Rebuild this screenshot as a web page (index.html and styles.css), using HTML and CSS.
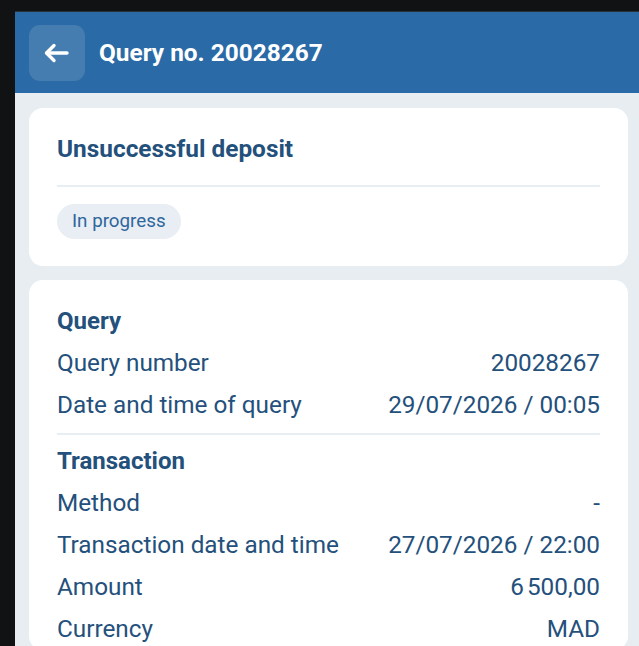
FILE: index.html
```html
<!DOCTYPE html>
<html lang="en">
<head>
    <meta charset="UTF-8">
    <meta name="viewport" content="width=device-width, initial-scale=1.0">
    <title>Query no. 20028267</title>
    <link rel="stylesheet" href="styles.css">
</head>
<body>

    <div class="screen">
        <header class="topbar">
            <button class="back-btn" aria-label="Back">
                <svg width="26" height="22" viewBox="0 0 26 22" fill="none" stroke="#ffffff" stroke-width="3.4" stroke-linecap="round" stroke-linejoin="round">
                    <path d="M23 11H3"/>
                    <path d="M10 3.5L2.5 11L10 18.5"/>
                </svg>
            </button>
            <h1>Query no. 20028267</h1>
        </header>

        <main class="content">
            <section class="card">
                <h2 class="card-title">Unsuccessful deposit</h2>
                <hr class="divider">
                <span class="badge">In progress</span>
            </section>

            <section class="card details">
                <h3 class="group-title">Query</h3>
                <div class="row"><span>Query number</span><span>20028267</span></div>
                <div class="row"><span>Date and time of query</span><span>29/07/2026 / 00:05</span></div>

                <hr class="divider thin">

                <h3 class="group-title">Transaction</h3>
                <div class="row"><span>Method</span><span>-</span></div>
                <div class="row"><span>Transaction date and time</span><span>27/07/2026 / 22:00</span></div>
                <div class="row"><span>Amount</span><span>6&#8239;500,00</span></div>
                <div class="row"><span>Currency</span><span>MAD</span></div>
            </section>
        </main>
    </div>

</body>
</html>
```

FILE: styles.css
```css
body {
    margin: 0;
    background: #111214;
    font-family: Roboto, "Noto Sans", sans-serif;
    color: #24507c;
}
.screen {
    margin: 11px 0 0 15px;
    min-height: 640px;
    background-color: #e8edf2;
    border-top: 1px solid #2b3138;
}
.topbar {
    display: flex;
    align-items: center;
    height: 81px;
    padding: 0 14px;
    background-color: #2a6aa6;
}
.back-btn {
    display: flex;
    align-items: center;
    justify-content: center;
    width: 56px;
    height: 56px;
    padding: 0;
    border: none;
    border-radius: 11px;
    background-color: rgba(255, 255, 255, 0.13);
    cursor: pointer;
}
.topbar h1 {
    margin: 0 0 0 14px;
    font-size: 24.4px;
    font-weight: 700;
    color: #ffffff;
}
.content {
    display: flex;
    flex-direction: column;
    gap: 14px;
    padding: 15px 11px 0 14px;
}
.card {
    background-color: #ffffff;
    border-radius: 14px;
    padding: 26px 28px 27px;
}
.card-title {
    margin: 0;
    font-size: 24.4px;
    line-height: 30px;
    font-weight: 700;
}
.divider {
    margin: 21px 0 17px;
    border: none;
    height: 2px;
    background-color: #e8edf2;
}
.badge {
    display: inline-block;
    padding: 0 15px;
    height: 35px;
    line-height: 35px;
    border-radius: 18px;
    background-color: #e8eef4;
    color: #2f669c;
    font-size: 18.8px;
}
.details {
    padding-top: 20px;
    padding-bottom: 0;
}
.group-title {
    margin: 0;
    font-size: 24px;
    line-height: 42px;
    font-weight: 700;
}
.row {
    display: flex;
    justify-content: space-between;
    font-size: 24.3px;
    line-height: 42px;
}
.divider.thin {
    margin: 7px 0 5px;
}
```
